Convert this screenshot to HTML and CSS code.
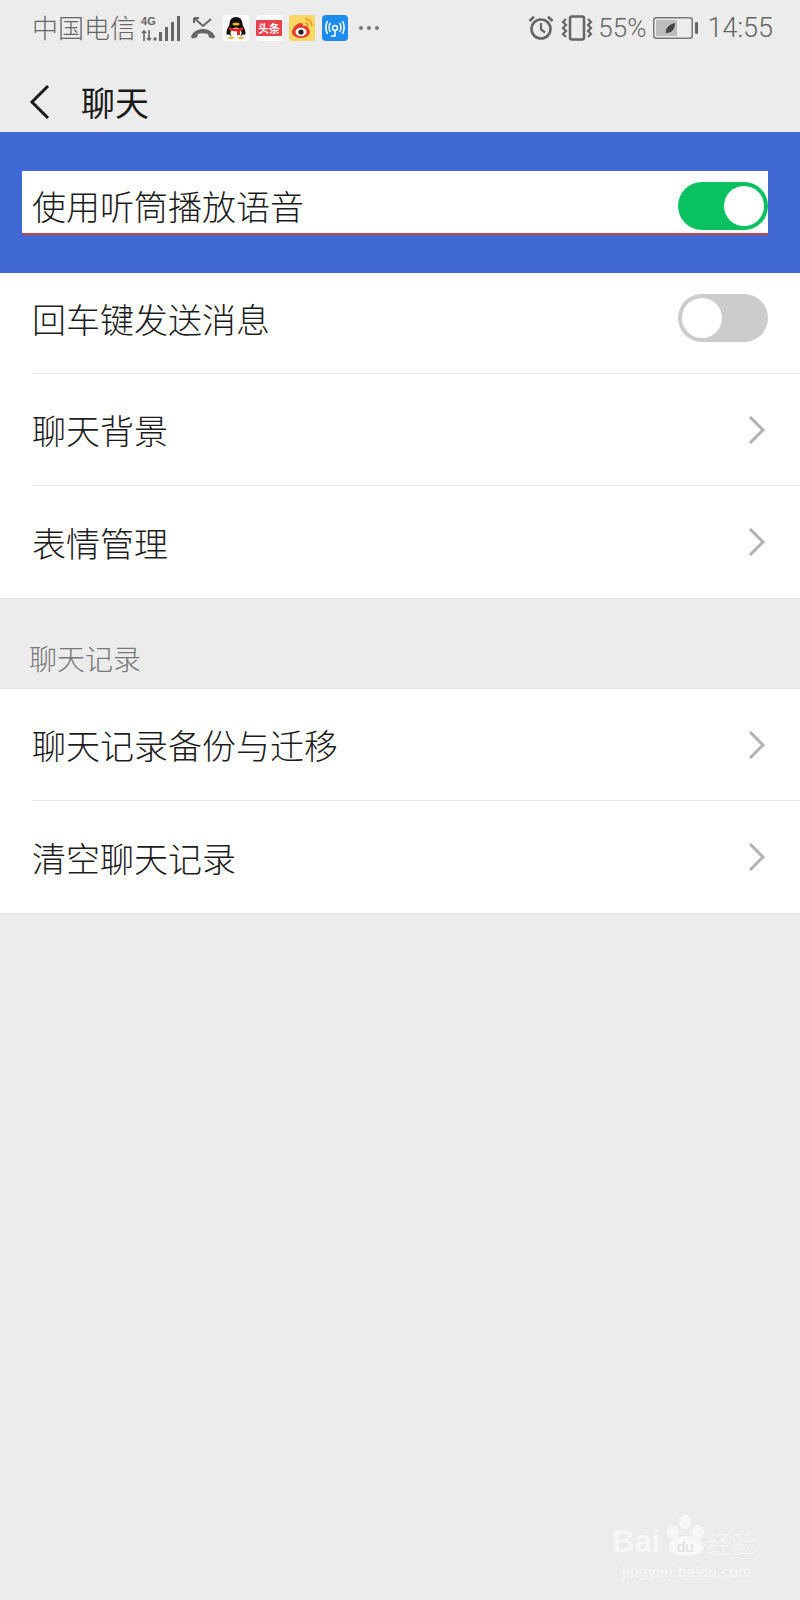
FILE: index.html
```html
<!DOCTYPE html>
<html lang="zh-CN">
<head>
    <meta charset="UTF-8">
    <meta name="viewport" content="width=device-width, initial-scale=1.0">
    <title>聊天</title>
    <link rel="stylesheet" href="styles.css">
</head>
<body>
    <div class="status-bar">
        <span class="carrier">中国电信</span>
        <div class="signal">
            <div class="net-stack">
                <span class="net">4G</span>
                <svg width="16" height="11" viewBox="0 0 16 11"><path d="M3 11V1M1 3l2-2 2 2M8 0v10M6 8l2 2 2-2" fill="none" stroke="#666" stroke-width="1.6"/><circle cx="14" cy="9" r="1.7" fill="#666"/></svg>
            </div>
            <svg width="22" height="25" viewBox="0 0 22 25"><g fill="#666"><rect x="0" y="16" width="3" height="9"/><rect x="6" y="11" width="3" height="14"/><rect x="12" y="6" width="3" height="19"/><rect x="18" y="0" width="3" height="25"/></g></svg>
        </div>
        <svg class="missed" width="26" height="24" viewBox="0 0 26 24"><path d="M1 20.5c2-5 7-7.500 12-7.500s10 2.500 12 7.500l-1 2-5-1-1-3.500c-3-1-7-1-10 0l-1 3.500-5 1z" fill="#666"/><path d="M4 2l9 8 8-7M4 2h5M4 2v5" fill="none" stroke="#666" stroke-width="2"/></svg>
        <svg class="app" width="26" height="26" viewBox="0 0 26 26"><rect width="26" height="26" rx="3" fill="#fff"/><path d="M13 2c4.500 0 6.500 3.500 6.500 7 0 1.500 3 5 3 9 0 2-1 2.500-2.500 1-1 4-13 4-14 0-1.500 1.500-2.500 1-2.500-1 0-4 3-7.500 3-9 0-3.500 2-7 6.500-7z" fill="#111"/><ellipse cx="13" cy="18" rx="5.500" ry="5.500" fill="#fff"/><ellipse cx="13" cy="9" rx="3.500" ry="1.500" fill="#f5b21b"/><path d="M6 12c4 2 10 2 14 0v3c-1 .5-2 1-3 1v4h-3v-3.500c-3 0-6-1-8-1.500z" fill="#d92b20"/><path d="M5 22h6l-1 2H6zM15 22h6l-1 2h-4z" fill="#f5b21b"/></svg>
        <svg class="app" width="26" height="26" viewBox="0 0 26 26"><rect width="26" height="26" rx="3" fill="#fff"/><rect x="0" y="5" width="26" height="16" rx="1" fill="#e8414a"/><text x="13" y="18" class="app-text">头条</text></svg>
        <svg class="app" width="26" height="26" viewBox="0 0 26 26"><rect width="26" height="26" rx="3" fill="#fbd662"/><path d="M3 17c0-4 5-9 9-9 2 0 2.500 2 2 3.500 3-1 6 0 5.500 2.500 1 .5 1.500 1.500 1.500 3 0 3-4 6-9 6s-9-2.500-9-6z" fill="#e2402d"/><ellipse cx="12" cy="17" rx="5.500" ry="4.200" fill="#fff"/><circle cx="12" cy="17" r="2.600" fill="#222"/><path d="M16 4c4 0 7 3 7 7M16 8c2 0 3 1 3 3" fill="none" stroke="#e99a22" stroke-width="1.600"/></svg>
        <svg class="app" width="26" height="26" viewBox="0 0 26 26"><rect width="26" height="26" rx="4" fill="#1d8cf0"/><g fill="none" stroke="#fff" stroke-width="1.500"><circle cx="13" cy="13" r="2.500"/><path d="M13 15.500V21H9M8.500 8c-2 3-2 6 0 9M17.500 8c2 3 2 6 0 9M5.500 6c-2 4-2 9 0 13M20.500 6c2 4 2 9 0 13"/></g></svg>
        <div class="more"><i></i><i></i><i></i></div>
        <div class="status-right">
            <svg width="26" height="26" viewBox="0 0 26 26"><g fill="none" stroke="#666"><circle cx="13" cy="14" r="9.500" stroke-width="2.600"/><path d="M13 8v6.500l4 3" stroke-width="2.200"/><path d="M1.500 6L6 1.800M24.500 6L20 1.800" stroke-width="2.600"/></g></svg>
            <svg class="vibrate" width="32" height="26" viewBox="0 0 32 26"><g fill="none" stroke="#666"><rect x="9" y="1.500" width="14" height="23" rx="2" stroke-width="2.500"/><path d="M5 4L2 7l3 3-3 3 3 3-3 3 3 3M27 4l3 3-3 3 3 3-3 3 3 3-3 3" stroke-width="2.200"/></g></svg>
            <span class="percent">55%</span>
            <svg class="battery" width="46" height="22" viewBox="0 0 46 22"><rect x=".75" y=".75" width="38.500" height="20.500" rx="2.500" fill="#ececec" stroke="#777" stroke-width="1.500"/><rect x="3" y="3" width="21" height="16" fill="#bdbdbd"/><path d="M13 16c-1-5 4-9 9-10 0 6-3 10-9 10z" fill="#444"/><rect x="42" y="5" width="3" height="12" rx="1" fill="#666"/></svg>
            <span class="clock">14:55</span>
        </div>
    </div>

    <div class="nav-bar">
        <svg width="22" height="36" viewBox="0 0 22 36"><path d="M19 2L3 18l16 16" fill="none" stroke="#1a1a1a" stroke-width="3"/></svg>
        <h1>聊天</h1>
    </div>

    <div class="highlight">
        <div class="highlight-box">
            <span>使用听筒播放语音</span>
            <div class="switch on"><div class="knob"></div></div>
        </div>
    </div>

    <div class="group">
        <div class="row first">
            <span>回车键发送消息</span>
            <div class="switch"><div class="knob"></div></div>
        </div>
        <div class="row">
            <span>聊天背景</span>
            <svg class="chevron" width="18" height="28" viewBox="0 0 18 28"><path d="M2 1l13 13L2 27" fill="none" stroke="#b2b2b2" stroke-width="3"/></svg>
        </div>
        <div class="row">
            <span>表情管理</span>
            <svg class="chevron" width="18" height="28" viewBox="0 0 18 28"><path d="M2 1l13 13L2 27" fill="none" stroke="#b2b2b2" stroke-width="3"/></svg>
        </div>
    </div>

    <div class="section-title">聊天记录</div>

    <div class="group">
        <div class="row">
            <span>聊天记录备份与迁移</span>
            <svg class="chevron" width="18" height="28" viewBox="0 0 18 28"><path d="M2 1l13 13L2 27" fill="none" stroke="#b2b2b2" stroke-width="3"/></svg>
        </div>
        <div class="row">
            <span>清空聊天记录</span>
            <svg class="chevron" width="18" height="28" viewBox="0 0 18 28"><path d="M2 1l13 13L2 27" fill="none" stroke="#b2b2b2" stroke-width="3"/></svg>
        </div>
    </div>

    <div class="watermark">
        <div class="wm-logo">
            <span class="wm-bai">Bai</span>
            <div class="wm-paw">
                <svg width="40" height="42" viewBox="0 0 40 42"><g fill="#f7f7f7"><ellipse cx="7" cy="17" rx="6" ry="7"/><ellipse cx="19" cy="7" rx="6" ry="7"/><ellipse cx="32" cy="17" rx="6" ry="7"/><path d="M3 32c0-7 9-11 17-11s17 4 17 11c0 6-8 9-17 9S3 38 3 32z"/></g></svg>
                <span class="wm-du">du</span>
            </div>
            <span class="wm-cn">经验</span>
        </div>
        <div class="wm-url">jingyan.baidu.com</div>
    </div>
</body>
</html>
```

FILE: styles.css
```css
* {
    box-sizing: border-box;
}
html, body {
    margin: 0;
    padding: 0;
}
body {
    position: relative;
    width: 800px;
    height: 1600px;
    overflow: hidden;
    background-color: #ececec;
    font-family: "Noto Sans CJK SC", "Liberation Sans", sans-serif;
    font-weight: 300;
    color: #1c1c1c;
}
.status-bar {
    height: 56px;
    padding: 0 27px 0 32px;
    display: flex;
    align-items: center;
    color: #666;
}
.carrier {
    font-size: 26px;
    line-height: 1;
    margin-top: -2px;
}
.signal {
    display: flex;
    align-items: flex-end;
    margin-left: 5px;
    width: 42px;
    gap: 2px;
}
.net-stack {
    display: flex;
    flex-direction: column;
    width: 16px;
    gap: 3px;
}
.net {
    font-family: "Liberation Sans", sans-serif;
    font-size: 11px;
    font-weight: bold;
    line-height: 11px;
}
.missed {
    margin: 0 7px 0 7px;
}
.app {
    margin-right: 7px;
}
.app-text {
    font-size: 11px;
    font-weight: bold;
    fill: #fff;
    text-anchor: middle;
}
.more {
    display: flex;
    gap: 4px;
    margin-left: 4px;
}
.more i {
    width: 4px;
    height: 4px;
    border-radius: 50%;
    background-color: #777;
}
.status-right {
    margin-left: auto;
    display: flex;
    align-items: center;
}
.vibrate {
    margin-left: 7px;
}
.percent, .clock {
    font-family: Roboto, sans-serif;
    font-size: 26px;
    line-height: 1;
}
.percent {
    margin: 0 8px 0 5px;
}
.clock {
    font-size: 27px;
    margin-left: 8px;
}
.battery {
    margin-left: -1px;
}
.nav-bar {
    height: 76px;
    padding: 15px 0 0 29px;
    display: flex;
    align-items: center;
}
.nav-bar h1 {
    margin: 0 0 0 30px;
    font-size: 34px;
    font-weight: 400;
    line-height: 1;
    color: #1a1a1a;
}
.highlight {
    height: 141px;
    padding: 39px 32px 0 22px;
    background-color: #4169d4;
}
.highlight-box {
    height: 64px;
    padding: 11px 0 0 10px;
    display: flex;
    align-items: flex-start;
    justify-content: space-between;
    background-color: #fff;
    border-bottom: 2px solid #c8423f;
    font-size: 34px;
    line-height: 48px;
}
.group {
    background-color: #fff;
    border-bottom: 1px solid #e3e3e3;
}
.row {
    height: 112px;
    margin-left: 32px;
    padding-right: 32px;
    display: flex;
    align-items: center;
    justify-content: space-between;
    font-size: 34px;
    border-bottom: 1px solid #e8e8e8;
}
.row.first {
    height: 101px;
    padding-bottom: 10px;
}
.row:last-child {
    border-bottom: 0;
}
.switch {
    width: 90px;
    height: 48px;
    padding: 4px;
    border-radius: 24px;
    background-color: #ccc;
}
.switch .knob {
    width: 40px;
    height: 40px;
    border-radius: 50%;
    background-color: #fff;
}
.switch.on {
    background-color: #0ac160;
}
.switch.on .knob {
    margin-left: auto;
}
.chevron {
    margin-right: 2px;
}
.section-title {
    height: 90px;
    padding: 41px 0 0 29px;
    font-size: 28px;
    line-height: 36px;
    color: #777;
    border-bottom: 1px solid #e3e3e3;
}
.watermark {
    position: absolute;
    left: 612px;
    top: 1515px;
    width: 150px;
    color: #f7f7f7;
}
.wm-logo {
    display: flex;
    align-items: flex-end;
    height: 42px;
}
.wm-bai {
    width: 54px;
    font-family: "Liberation Sans", sans-serif;
    font-size: 31px;
    line-height: 30px;
    font-weight: 700;
}
.wm-paw {
    position: relative;
    width: 40px;
    height: 42px;
}
.wm-du {
    position: absolute;
    left: 11px;
    bottom: 2px;
    font-family: "Liberation Sans", sans-serif;
    font-size: 15px;
    line-height: 16px;
    color: #dcdcdc;
}
.wm-cn {
    font-size: 24px;
    line-height: 28px;
    margin-left: 1px;
    white-space: nowrap;
}
.wm-url {
    font-family: "Liberation Sans", sans-serif;
    font-size: 15px;
    line-height: 18px;
    letter-spacing: .5px;
    margin-top: 6px;
    text-align: center;
}
```
